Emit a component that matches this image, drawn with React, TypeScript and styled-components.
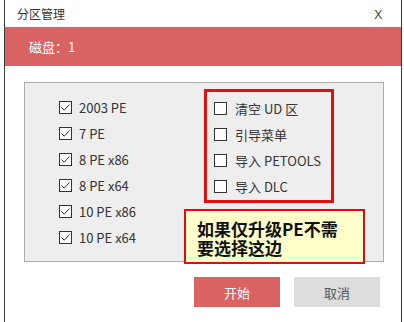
import React from "react";
import styled, { createGlobalStyle } from "styled-components";

const Global = createGlobalStyle`
  html, body { margin: 0; padding: 0; background: #ffffff; }
  body { font-family: "Noto Sans CJK SC", "Noto Sans", sans-serif; }
`;

const Window = styled.div`
  position: relative;
  margin-left: 4px;
  width: 396px;
  height: 322px;
  border-left: 1px solid #3a3a3a;
  border-right: 1px solid #3a3a3a;
  background: #ffffff;
  display: flex;
  flex-direction: column;
`;

const TitleBar = styled.div`
  height: 27px;
  display: flex;
  align-items: center;
  justify-content: space-between;
  padding: 0 19px 0 12px;
  font-size: 12px;
  color: #333333;
`;

const CloseMark = styled.span`
  font-family: "Noto Sans", sans-serif;
  font-size: 13px;
  color: #444444;
`;

const DiskBand = styled.div`
  height: 39px;
  background: #d96262;
  color: #ffffff;
  display: flex;
  align-items: center;
  padding-left: 24px;
  font-size: 13px;
`;

const Panel = styled.div`
  margin: 16px 0 0 19px;
  width: 358px;
  height: 178px;
  border: 1px solid #ababab;
  background: #eeeeee;
  display: flex;
  padding: 6px 0 0 34px;
  box-sizing: content-box;
  width: 324px;
  height: 172px;
`;

const LeftColumn = styled.div`
  width: 145px;
  padding-top: 5px;
  display: flex;
  flex-direction: column;
`;

const Row = styled.div<{ $gap: number }>`
  height: 26px;
  display: flex;
  align-items: center;
  gap: ${(p) => p.$gap}px;
  font-size: 13px;
  color: #333333;
  white-space: nowrap;
`;

const HighlightBox = styled.div`
  width: 124px;
  height: 108px;
  border: 3px solid #e01010;
  padding: 3px 0 0 7px;
  box-sizing: border-box;
  width: 130px;
  height: 114px;
  display: flex;
  flex-direction: column;
`;

const Box = styled.span`
  width: 13px;
  height: 13px;
  box-sizing: border-box;
  border: 1px solid #333333;
  background: #ffffff;
  display: inline-flex;
  flex-shrink: 0;
`;

const Note = styled.div`
  position: absolute;
  left: 179px;
  top: 209px;
  width: 181px;
  height: 55px;
  box-sizing: border-box;
  border: 2px solid #d81010;
  background: #ffffcc;
  padding: 8px 0 0 11px;
  font-size: 17px;
  font-weight: 700;
  line-height: 19px;
  color: #111111;
`;

const ButtonRow = styled.div`
  margin: 15px 0 0 189px;
  display: flex;
  gap: 14px;
`;

const Button = styled.button<{ $primary?: boolean }>`
  width: 86px;
  height: 30px;
  border: none;
  padding: 0;
  font-family: "Noto Sans CJK SC", sans-serif;
  font-size: 13px;
  background: ${(p) => (p.$primary ? "#d96262" : "#dddddd")};
  color: ${(p) => (p.$primary ? "#ffffff" : "#555555")};
`;

const Check: React.FC<{ checked?: boolean }> = ({ checked }) => (
  <Box>
    {checked && (
      <svg width="11" height="11" viewBox="0 0 11 11">
        <polyline points="1.5,5.5 4.2,8.2 9.5,2.5" fill="none" stroke="#333" strokeWidth="1" />
      </svg>
    )}
  </Box>
);

const leftItems = ["2003 PE", "7 PE", "8 PE x86", "8 PE x64", "10 PE x86", "10 PE x64"];
const rightItems = ["清空 UD 区", "引导菜单", "导入 PETOOLS", "导入 DLC"];

export default function App() {
  return (
    <>
      <Global />
      <Window>
        <TitleBar>
          <span>分区管理</span>
          <CloseMark>X</CloseMark>
        </TitleBar>
        <DiskBand>磁盘：1</DiskBand>
        <Panel>
          <LeftColumn>
            {leftItems.map((t) => (
              <Row key={t} $gap={7}>
                <Check checked />
                <span>{t}</span>
              </Row>
            ))}
          </LeftColumn>
          <HighlightBox>
            {rightItems.map((t) => (
              <Row key={t} $gap={8}>
                <Check />
                <span>{t}</span>
              </Row>
            ))}
          </HighlightBox>
        </Panel>
        <ButtonRow>
          <Button $primary>开始</Button>
          <Button>取消</Button>
        </ButtonRow>
        <Note>
          如果仅升级PE不需
          <br />
          要选择这边
        </Note>
      </Window>
    </>
  );
}
